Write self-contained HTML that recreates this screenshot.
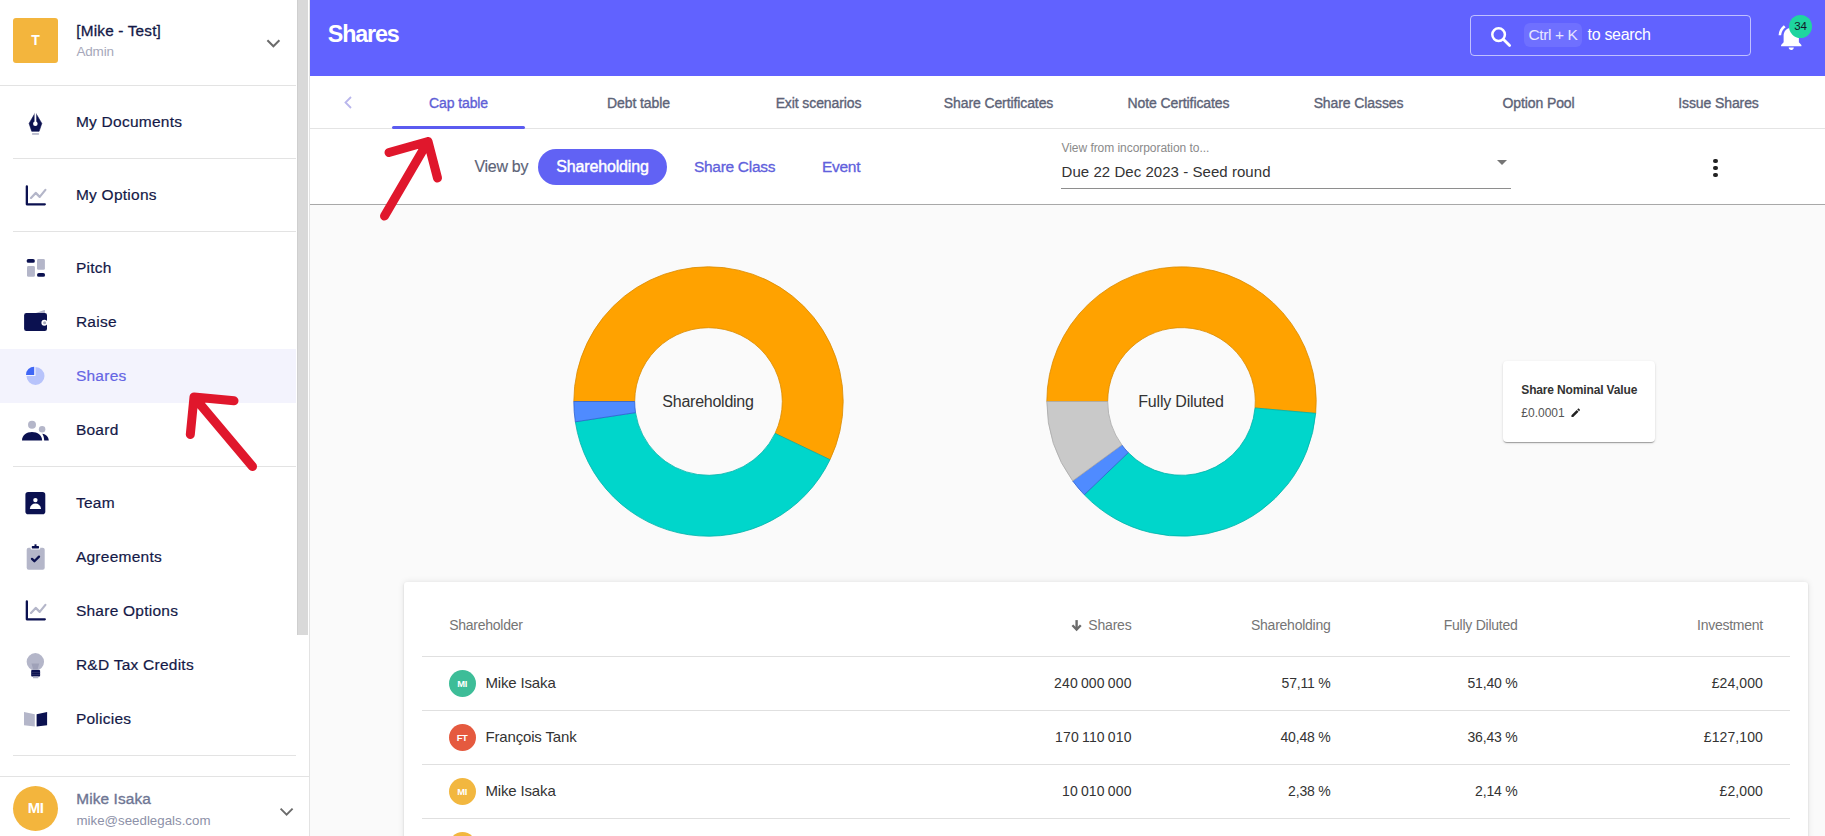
<!DOCTYPE html>
<html><head><meta charset="utf-8"><style>
html,body{margin:0;padding:0;width:1825px;height:836px;overflow:hidden;background:#fff;font-family:"Liberation Sans",sans-serif;}
.t{position:absolute;white-space:nowrap;}
.hl{position:absolute;height:1px;background:#e3e3e3;}
</style></head><body>
<div id="sb" style="position:absolute;left:0;top:0;width:309px;height:836px;background:#fff;border-right:1px solid #e3e3e3;"></div>
<div style="position:absolute;left:297px;top:0;width:11px;height:635px;background:#d9d9d9;border-left:1px solid #cfcfcf;box-sizing:border-box"></div>
<div style="position:absolute;left:13px;top:18px;width:45px;height:45px;border-radius:3px;background:#f3b53d;"></div>
<div class="t" style="left:-264.5px;width:600px;text-align:center;top:33px;font-size:14px;line-height:14px;color:#fff;font-weight:700;">T</div>
<div class="t" style="left:76.3px;top:23px;font-size:15.3px;line-height:15.3px;color:#141947;font-weight:400;-webkit-text-stroke:0.3px #141947;letter-spacing:0.2px">[Mike - Test]</div>
<div class="t" style="left:76.5px;top:45px;font-size:13.5px;line-height:13.5px;color:#a6a8ba;font-weight:400;letter-spacing:-0.2px">Admin</div>
<svg style="position:absolute;left:265px;top:37px" width="17" height="12" viewBox="0 0 17 12"><path d="M2.4 3.3 L8.4 9.3 L14.4 3.3" fill="none" stroke="#6b6b6b" stroke-width="2"/></svg>
<div class="hl" style="left:0;top:85px;width:296px"></div>
<svg style="position:absolute;left:25px;top:110px" width="22" height="28" viewBox="0 0 22 28"><path d="M10.4 2.6 L16.8 13.4 L14.1 21.3 L6.7 21.3 L4.1 13.4 Z" fill="#0b1150" stroke="#0b1150" stroke-width="0.6" stroke-linejoin="round"/><path d="M10.4 1.5 L10.4 12.5" stroke="#fff" stroke-width="1.8"/><circle cx="10.35" cy="13.8" r="2.3" fill="#fff"/><rect x="7.1" y="23.1" width="6.8" height="1.7" fill="#b4b6c9"/></svg><div class="t" style="left:75.9px;top:114px;font-size:15.5px;line-height:15.5px;color:#141947;font-weight:400;-webkit-text-stroke:0.2px #141947;letter-spacing:0.25px">My Documents</div>
<div class="hl" style="left:13px;top:158px;width:283px"></div>
<svg style="position:absolute;left:24.5px;top:185px" width="22" height="22" viewBox="0 0 22 22"><path d="M1.85 1.5 L1.85 19.3 L19.8 19.3" fill="none" stroke="#0b1150" stroke-width="2.3" stroke-linecap="round" stroke-linejoin="round"/><path d="M6 12.9 L10.7 7.9 L14.7 11.9 L20.4 4.9" fill="none" stroke="#b4b6c9" stroke-width="2.2" stroke-linecap="round" stroke-linejoin="round"/></svg><div class="t" style="left:75.9px;top:187px;font-size:15.5px;line-height:15.5px;color:#141947;font-weight:400;-webkit-text-stroke:0.2px #141947;letter-spacing:0.25px">My Options</div>
<div class="hl" style="left:13px;top:231px;width:283px"></div>
<svg style="position:absolute;left:25px;top:257px" width="22" height="22" viewBox="0 0 22 22"><rect x="1.6" y="2" width="8.3" height="3.8" rx="1.9" fill="#0b1150"/><rect x="2" y="9" width="7.9" height="10.8" rx="1.4" fill="#b4b6c9"/><rect x="12" y="2" width="7.9" height="10.8" rx="1.4" fill="#b4b6c9"/><rect x="12" y="16" width="8.1" height="3.8" rx="1.9" fill="#0b1150"/></svg><div class="t" style="left:75.9px;top:260px;font-size:15.5px;line-height:15.5px;color:#141947;font-weight:400;-webkit-text-stroke:0.2px #141947;letter-spacing:0.25px">Pitch</div>
<svg style="position:absolute;left:23px;top:308px" width="26" height="25" viewBox="0 0 26 25"><path d="M11.5 5.5 L21.2 2 Q21.9 1.8 21.9 2.6 L21.9 6 Z" fill="#b4b6c9"/><rect x="1.1" y="5" width="22.9" height="18" rx="2.2" fill="#0b1150"/><circle cx="21.4" cy="14.8" r="3" fill="#fff"/><circle cx="21.6" cy="14.8" r="1.5" fill="#a9abbd"/></svg><div class="t" style="left:75.9px;top:314px;font-size:15.5px;line-height:15.5px;color:#141947;font-weight:400;-webkit-text-stroke:0.2px #141947;letter-spacing:0.25px">Raise</div>
<div style="position:absolute;left:0;top:348.7px;width:296px;height:54px;background:#f3f3fd"></div><svg style="position:absolute;left:25px;top:365px" width="21" height="21" viewBox="0 0 21 21"><path d="M10.5 11 L10.5 2 A9 9 0 1 1 1.5 11 Z" fill="#b7c3fb"/><path d="M9.2 9.9 L1 9.9 A8.2 8.2 0 0 1 9.2 1.7 Z" fill="#3f66f5"/></svg><div class="t" style="left:75.9px;top:368px;font-size:15.5px;line-height:15.5px;color:#6565e4;font-weight:400;-webkit-text-stroke:0.2px #6565e4;letter-spacing:0.25px">Shares</div>
<svg style="position:absolute;left:21px;top:419px" width="29" height="23" viewBox="0 0 29 23"><circle cx="11" cy="5.7" r="4" fill="#b4b6c9"/><circle cx="21.1" cy="10.3" r="3.25" fill="#b4b6c9"/><path d="M1 21.6 C1 16 5.5 13 11 13 C16.5 13 21.1 16 21.1 21.6 Z" fill="#0b1150"/><path d="M21.3 14.8 C25.2 15.3 27.6 18 27.8 21.6 L23.2 21.6 C23 18.8 22.5 16.6 21.3 14.8 Z" fill="#0b1150"/></svg><div class="t" style="left:75.9px;top:422px;font-size:15.5px;line-height:15.5px;color:#141947;font-weight:400;-webkit-text-stroke:0.2px #141947;letter-spacing:0.25px">Board</div>
<div class="hl" style="left:13px;top:466px;width:283px"></div>
<svg style="position:absolute;left:25px;top:491px" width="22" height="25" viewBox="0 0 22 25"><rect x="0.4" y="1.1" width="19.9" height="22.1" rx="2.8" fill="#0b1150"/><circle cx="10.4" cy="9.1" r="2.2" fill="#fff"/><path d="M4.8 18.1 C5.2 14.5 7.5 12.6 10.4 12.6 C13.3 12.6 15.7 14.5 16.1 18.1 Z" fill="#fff"/></svg><div class="t" style="left:75.9px;top:495px;font-size:15.5px;line-height:15.5px;color:#141947;font-weight:400;-webkit-text-stroke:0.2px #141947;letter-spacing:0.25px">Team</div>
<svg style="position:absolute;left:25px;top:543px" width="22" height="28" viewBox="0 0 22 28"><rect x="1.7" y="4.7" width="18" height="22.1" rx="2" fill="#b4b6c9"/><rect x="5.6" y="2.4" width="9.6" height="4" rx="1" fill="#fff"/><rect x="6.8" y="3.1" width="7.2" height="2.3" rx="0.6" fill="#0b1150"/><rect x="9.5" y="1.3" width="2" height="2" fill="#0b1150"/><path d="M7 15.9 L9.4 18.2 L14 13.6" fill="none" stroke="#0b1150" stroke-width="2.3" stroke-linecap="round" stroke-linejoin="round"/></svg><div class="t" style="left:75.9px;top:549px;font-size:15.5px;line-height:15.5px;color:#141947;font-weight:400;-webkit-text-stroke:0.2px #141947;letter-spacing:0.25px">Agreements</div>
<svg style="position:absolute;left:24.5px;top:600px" width="22" height="22" viewBox="0 0 22 22"><path d="M1.85 1.5 L1.85 19.3 L19.8 19.3" fill="none" stroke="#0b1150" stroke-width="2.3" stroke-linecap="round" stroke-linejoin="round"/><path d="M6 12.9 L10.7 7.9 L14.7 11.9 L20.4 4.9" fill="none" stroke="#b4b6c9" stroke-width="2.2" stroke-linecap="round" stroke-linejoin="round"/></svg><div class="t" style="left:75.9px;top:603px;font-size:15.5px;line-height:15.5px;color:#141947;font-weight:400;-webkit-text-stroke:0.2px #141947;letter-spacing:0.25px">Share Options</div>
<svg style="position:absolute;left:25px;top:652px" width="21" height="28" viewBox="0 0 21 28"><circle cx="10.35" cy="9.8" r="8.7" fill="#b4b6c9"/><path d="M6.5 11.5 L14.2 11.5 L12.5 17.5 L8.2 17.5 Z" fill="#9fa1b8"/><rect x="6.2" y="18" width="8.9" height="6.5" rx="0.8" fill="#0b1150"/><rect x="6.2" y="20.3" width="8.9" height="0.6" fill="#3a3f70"/><rect x="6.2" y="22.3" width="8.9" height="0.6" fill="#3a3f70"/><rect x="8" y="24.5" width="5.4" height="1.8" rx="0.6" fill="#b4b6c9"/></svg><div class="t" style="left:75.9px;top:657px;font-size:15.5px;line-height:15.5px;color:#141947;font-weight:400;-webkit-text-stroke:0.2px #141947;letter-spacing:0.25px">R&amp;D Tax Credits</div>
<svg style="position:absolute;left:23px;top:710px" width="26" height="19" viewBox="0 0 26 19"><path d="M1 1.9 L11.8 4.3 L11.8 16.5 L1 15.3 Z" fill="#b4b6c9"/><path d="M13.6 4.3 L24.1 1.9 L24.1 15.3 L13.6 16.5 Z" fill="#0b1150"/></svg><div class="t" style="left:75.9px;top:711px;font-size:15.5px;line-height:15.5px;color:#141947;font-weight:400;-webkit-text-stroke:0.2px #141947;letter-spacing:0.25px">Policies</div>
<div class="hl" style="left:13px;top:755px;width:283px"></div>
<div class="hl" style="left:0;top:776px;width:309px"></div>
<div style="position:absolute;left:13px;top:786px;width:45px;height:45px;border-radius:50%;background:#f3b53d"></div>
<div class="t" style="left:-264.5px;width:600px;text-align:center;top:800px;font-size:15px;line-height:15px;color:#fff;font-weight:700;letter-spacing:-0.5px">MI</div>
<div class="t" style="left:76.3px;top:791px;font-size:15.4px;line-height:15.4px;color:#6e7593;font-weight:400;-webkit-text-stroke:0.35px #6e7593;letter-spacing:0.1px">Mike Isaka</div>
<div class="t" style="left:76.5px;top:814px;font-size:13.3px;line-height:13.3px;color:#8d91a8;font-weight:400;">mike@seedlegals.com</div>
<svg style="position:absolute;left:278px;top:805px" width="17" height="12" viewBox="0 0 17 12"><path d="M2.6 3.6 L8.6 9.6 L14.6 3.6" fill="none" stroke="#6b6b6b" stroke-width="1.9"/></svg>
<div style="position:absolute;left:310px;top:0;width:1515px;height:76px;background:#6162ff"></div>
<div class="t" style="left:327.8px;top:23px;font-size:23.3px;line-height:23.3px;color:#fff;font-weight:700;letter-spacing:-1.15px">Shares</div>
<div style="position:absolute;left:1470px;top:15px;width:281px;height:41px;box-sizing:border-box;border:1px solid rgba(255,255,255,0.6);border-radius:4px"></div>
<svg style="position:absolute;left:1488px;top:24px" width="26" height="26" viewBox="0 0 26 26"><circle cx="10.6" cy="10.6" r="6.3" fill="none" stroke="#fff" stroke-width="2.5"/><path d="M15.3 15.3 L21.6 21.6" stroke="#fff" stroke-width="2.8" stroke-linecap="round"/></svg>
<div style="position:absolute;left:1524px;top:23px;width:58px;height:24px;border-radius:6px;background:rgba(255,255,255,0.09)"></div>
<div class="t" style="left:1528.5px;top:27px;font-size:15.5px;line-height:15.5px;color:#e6e6ff;font-weight:400;letter-spacing:-0.4px">Ctrl + K</div>
<div class="t" style="left:1587.5px;top:27px;font-size:16px;line-height:16px;color:#fff;font-weight:400;letter-spacing:-0.3px">to search</div>
<svg style="position:absolute;left:1776.3px;top:22px" width="30.5" height="30.5" viewBox="0 0 24 24"><path fill="#fff" d="M7.58 4.08L6.15 2.65C3.75 4.48 2.17 7.3 2.03 10.5h2c.15-2.65 1.51-4.97 3.55-6.42zm12.39 6.42h2c-.15-3.2-1.73-6.02-4.12-7.85l-1.42 1.43c2.02 1.45 3.39 3.77 3.54 6.42zM18 11c0-3.07-1.64-5.64-4.5-6.32V4c0-.83-.67-1.5-1.5-1.5s-1.5.67-1.5 1.5v.68C7.63 5.36 6 7.92 6 11v5l-2 2v1h16v-1l-2-2v-5zm-6 11c.14 0 .27-.01.4-.04.65-.14 1.18-.58 1.44-1.18.1-.24.15-.5.15-.78h-4c.01 1.1.9 2 2.01 2z"/></svg>
<div style="position:absolute;left:1789px;top:14.8px;width:23px;height:23px;border-radius:50%;background:#1fd59f"></div>
<div class="t" style="left:1500.6px;width:600px;text-align:center;top:21px;font-size:11.5px;line-height:11.5px;color:#111827;font-weight:400;">34</div>
<div style="position:absolute;left:310px;top:76px;width:1515px;height:53px;background:#fff;border-bottom:1px solid #e4e4e4;box-sizing:border-box"></div>
<svg style="position:absolute;left:340px;top:94px" width="16" height="16" viewBox="0 0 16 16"><path d="M11 3 L5.5 8.5 L11 14" fill="none" stroke="#b9b6ec" stroke-width="1.8"/></svg>
<div class="t" style="left:158.5px;width:600px;text-align:center;top:96px;font-size:14px;line-height:14px;color:#5f5fd6;font-weight:400;-webkit-text-stroke:0.35px #5f5fd6;letter-spacing:-0.1px">Cap table</div>
<div class="t" style="left:338.5px;width:600px;text-align:center;top:96px;font-size:14px;line-height:14px;color:#5d6377;font-weight:400;-webkit-text-stroke:0.35px #5d6377;letter-spacing:-0.1px">Debt table</div>
<div class="t" style="left:518.5px;width:600px;text-align:center;top:96px;font-size:14px;line-height:14px;color:#5d6377;font-weight:400;-webkit-text-stroke:0.35px #5d6377;letter-spacing:-0.1px">Exit scenarios</div>
<div class="t" style="left:698.5px;width:600px;text-align:center;top:96px;font-size:14px;line-height:14px;color:#5d6377;font-weight:400;-webkit-text-stroke:0.35px #5d6377;letter-spacing:-0.1px">Share Certificates</div>
<div class="t" style="left:878.5px;width:600px;text-align:center;top:96px;font-size:14px;line-height:14px;color:#5d6377;font-weight:400;-webkit-text-stroke:0.35px #5d6377;letter-spacing:-0.1px">Note Certificates</div>
<div class="t" style="left:1058.5px;width:600px;text-align:center;top:96px;font-size:14px;line-height:14px;color:#5d6377;font-weight:400;-webkit-text-stroke:0.35px #5d6377;letter-spacing:-0.1px">Share Classes</div>
<div class="t" style="left:1238.5px;width:600px;text-align:center;top:96px;font-size:14px;line-height:14px;color:#5d6377;font-weight:400;-webkit-text-stroke:0.35px #5d6377;letter-spacing:-0.1px">Option Pool</div>
<div class="t" style="left:1418.5px;width:600px;text-align:center;top:96px;font-size:14px;line-height:14px;color:#5d6377;font-weight:400;-webkit-text-stroke:0.35px #5d6377;letter-spacing:-0.1px">Issue Shares</div>
<div style="position:absolute;left:392px;top:126px;width:133px;height:3px;border-radius:2px;background:#5b5bf0"></div>
<div style="position:absolute;left:310px;top:129px;width:1515px;height:75px;background:#fff"></div>
<div style="position:absolute;left:310px;top:204px;width:1515px;height:1px;background:#a8a8a8;box-shadow:0 1px 2px rgba(0,0,0,0.12)"></div>
<div class="t" style="left:474.5px;top:159px;font-size:16px;line-height:16px;color:#5d6377;font-weight:400;letter-spacing:-0.3px;-webkit-text-stroke:0.15px #5d6377">View by</div>
<div style="position:absolute;left:538px;top:149px;width:129px;height:36px;border-radius:18px;background:#6162f4"></div>
<div class="t" style="left:302.5px;width:600px;text-align:center;top:159px;font-size:16px;line-height:16px;color:#fff;font-weight:400;-webkit-text-stroke:0.45px #fff;letter-spacing:-0.15px">Shareholding</div>
<div class="t" style="left:694px;top:159px;font-size:15.5px;line-height:15.5px;color:#6060dc;font-weight:400;-webkit-text-stroke:0.3px #6060dc;letter-spacing:-0.3px">Share Class</div>
<div class="t" style="left:822px;top:159px;font-size:15.5px;line-height:15.5px;color:#6060dc;font-weight:400;-webkit-text-stroke:0.3px #6060dc;letter-spacing:-0.3px">Event</div>
<div class="t" style="left:1061.5px;top:142px;font-size:12px;line-height:12px;color:#8a8a8a;font-weight:400;letter-spacing:-0.05px">View from incorporation to...</div>
<div class="t" style="left:1061.5px;top:164px;font-size:15px;line-height:15px;color:#333;font-weight:400;letter-spacing:0.05px">Due 22 Dec 2023 - Seed round</div>
<div style="position:absolute;left:1061px;top:188px;width:450px;height:1px;background:#8e8e8e"></div>
<svg style="position:absolute;left:1496px;top:159px" width="12" height="7" viewBox="0 0 12 7"><path d="M1 1 L11 1 L6 6 Z" fill="#757575"/></svg>
<div style="position:absolute;left:1713.4px;top:159.0px;width:4.2px;height:4.2px;border-radius:50%;background:#222"></div>
<div style="position:absolute;left:1713.4px;top:165.8px;width:4.2px;height:4.2px;border-radius:50%;background:#222"></div>
<div style="position:absolute;left:1713.4px;top:172.5px;width:4.2px;height:4.2px;border-radius:50%;background:#222"></div>
<div style="position:absolute;left:310px;top:205px;width:1515px;height:631px;background:#fafafa"></div>
<svg style="position:absolute;left:572.9px;top:266.0px" width="271" height="271" viewBox="0 0 271 271"><path d="M0.80 135.50A134.7 134.7 0 1 1 256.98 193.69L202.06 167.38A73.8 73.8 0 1 0 61.70 135.50Z" fill="#ffa200" stroke="#d98a00" stroke-width="0.8"/>
<path d="M256.98 193.69A134.7 134.7 0 0 1 2.34 155.82L62.54 146.63A73.8 73.8 0 0 0 202.06 167.38Z" fill="#00d6cb" stroke="#00b3aa" stroke-width="0.8"/>
<path d="M2.34 155.82A134.7 134.7 0 0 1 0.80 135.50L61.70 135.50A73.8 73.8 0 0 0 62.54 146.63Z" fill="#4f8bff" stroke="#2f62d0" stroke-width="0.8"/></svg>
<div class="t" style="left:408px;width:600px;text-align:center;top:394px;font-size:16px;line-height:16px;color:#333;font-weight:400;letter-spacing:-0.25px">Shareholding</div>
<svg style="position:absolute;left:1045.5px;top:266.0px" width="271" height="271" viewBox="0 0 271 271"><path d="M0.80 135.50A134.7 134.7 0 1 1 269.68 147.33L209.01 141.98A73.8 73.8 0 1 0 61.70 135.50Z" fill="#ffa200" stroke="#d98a00" stroke-width="0.8"/>
<path d="M269.68 147.33A134.7 134.7 0 0 1 38.30 228.75L82.24 186.59A73.8 73.8 0 0 0 209.01 141.98Z" fill="#00d6cb" stroke="#00b3aa" stroke-width="0.8"/>
<path d="M38.30 228.75A134.7 134.7 0 0 1 26.67 214.88L75.88 178.99A73.8 73.8 0 0 0 82.24 186.59Z" fill="#4f8bff" stroke="#2f62d0" stroke-width="0.8"/>
<path d="M26.67 214.88A134.7 134.7 0 0 1 0.80 135.50L61.70 135.50A73.8 73.8 0 0 0 75.88 178.99Z" fill="#c9c9c9" stroke="#aaaaaa" stroke-width="0.8"/></svg>
<div class="t" style="left:881px;width:600px;text-align:center;top:394px;font-size:16px;line-height:16px;color:#333;font-weight:400;letter-spacing:-0.2px">Fully Diluted</div>
<div style="position:absolute;left:1503px;top:361px;width:152px;height:81px;background:#fff;border-radius:4px;box-shadow:0 2px 1px -1px rgba(0,0,0,0.2),0 1px 1px 0 rgba(0,0,0,0.14),0 1px 3px 0 rgba(0,0,0,0.12)"></div>
<div class="t" style="left:1521.3px;top:384px;font-size:12px;line-height:12px;color:#333;font-weight:700;letter-spacing:-0.15px">Share Nominal Value</div>
<div class="t" style="left:1521.3px;top:407px;font-size:12px;line-height:12px;color:#555;font-weight:400;">£0.0001</div>
<svg style="position:absolute;left:1569.5px;top:407px" width="11.5" height="11.5" viewBox="0 0 24 24"><path fill="#222" d="M3 17.25V21h3.75L17.81 9.94l-3.75-3.75L3 17.25zM20.71 7.04c.39-.39.39-1.02 0-1.41l-2.34-2.34a.9959.9959 0 0 0-1.41 0l-1.83 1.83 3.75 3.75 1.83-1.83z"/></svg>
<div style="position:absolute;left:404px;top:582px;width:1404px;height:300px;background:#fff;border-radius:3px;box-shadow:0 1px 2px -1px rgba(0,0,0,0.2),0 1px 2px 0 rgba(0,0,0,0.10),0 0 6px 0 rgba(0,0,0,0.10)"></div>
<div class="t" style="left:449.2px;top:618px;font-size:14px;line-height:14px;color:#757575;font-weight:400;letter-spacing:-0.25px">Shareholder</div>
<svg style="position:absolute;left:1064px;top:612px" width="24" height="26" viewBox="1064 612 24 26"><path d="M1076.6 620.1 L1076.6 629" stroke="#6b6b6b" stroke-width="2.4"/><path d="M1072.4 625.2 L1076.6 629.6 L1080.8 625.2" fill="none" stroke="#6b6b6b" stroke-width="2.3"/></svg>
<div class="t" style="right:693.5px;top:618px;font-size:14px;line-height:14px;color:#757575;font-weight:400;letter-spacing:-0.2px">Shares</div>
<div class="t" style="right:494.5px;top:618px;font-size:14px;line-height:14px;color:#757575;font-weight:400;letter-spacing:-0.25px">Shareholding</div>
<div class="t" style="right:307.5px;top:618px;font-size:14px;line-height:14px;color:#757575;font-weight:400;letter-spacing:-0.25px">Fully Diluted</div>
<div class="t" style="right:62px;top:618px;font-size:14px;line-height:14px;color:#757575;font-weight:400;letter-spacing:-0.25px">Investment</div>
<div class="hl" style="left:422px;top:655.5px;width:1368px;background:#e0e0e0"></div>
<div class="hl" style="left:422px;top:709.5px;width:1368px;background:#e0e0e0"></div>
<div class="hl" style="left:422px;top:763.5px;width:1368px;background:#e0e0e0"></div>
<div class="hl" style="left:422px;top:817.5px;width:1368px;background:#e0e0e0"></div>
<div style="position:absolute;left:448.9px;top:669.8px;width:27.4px;height:27.4px;border-radius:50%;background:#3dbd98"></div>
<div class="t" style="left:162.10000000000002px;width:600px;text-align:center;top:679px;font-size:9.4px;line-height:9.4px;color:#fff;font-weight:700;letter-spacing:-0.3px">MI</div>
<div class="t" style="left:485.4px;top:675px;font-size:15px;line-height:15px;color:#333;font-weight:400;letter-spacing:-0.15px">Mike Isaka</div>
<div class="t" style="right:693.2px;top:676px;font-size:14px;line-height:14px;color:#333;font-weight:400;letter-spacing:0.2px">240&#8201;000&#8201;000</div>
<div class="t" style="right:494.5px;top:676px;font-size:14px;line-height:14px;color:#333;font-weight:400;letter-spacing:-0.2px">57,11 %</div>
<div class="t" style="right:307.5px;top:676px;font-size:14px;line-height:14px;color:#333;font-weight:400;letter-spacing:-0.2px">51,40 %</div>
<div class="t" style="right:62px;top:676px;font-size:14px;line-height:14px;color:#333;font-weight:400;letter-spacing:0.1px">£24,000</div>
<div style="position:absolute;left:448.9px;top:723.8px;width:27.4px;height:27.4px;border-radius:50%;background:#e55a3f"></div>
<div class="t" style="left:162.10000000000002px;width:600px;text-align:center;top:733px;font-size:9.4px;line-height:9.4px;color:#fff;font-weight:700;letter-spacing:-0.3px">FT</div>
<div class="t" style="left:485.4px;top:729px;font-size:15px;line-height:15px;color:#333;font-weight:400;letter-spacing:-0.15px">François Tank</div>
<div class="t" style="right:693.2px;top:730px;font-size:14px;line-height:14px;color:#333;font-weight:400;letter-spacing:0.2px">170&#8201;110&#8201;010</div>
<div class="t" style="right:494.5px;top:730px;font-size:14px;line-height:14px;color:#333;font-weight:400;letter-spacing:-0.2px">40,48 %</div>
<div class="t" style="right:307.5px;top:730px;font-size:14px;line-height:14px;color:#333;font-weight:400;letter-spacing:-0.2px">36,43 %</div>
<div class="t" style="right:62px;top:730px;font-size:14px;line-height:14px;color:#333;font-weight:400;letter-spacing:0.1px">£127,100</div>
<div style="position:absolute;left:448.9px;top:777.8px;width:27.4px;height:27.4px;border-radius:50%;background:#f2b73f"></div>
<div class="t" style="left:162.10000000000002px;width:600px;text-align:center;top:787px;font-size:9.4px;line-height:9.4px;color:#fff;font-weight:700;letter-spacing:-0.3px">MI</div>
<div class="t" style="left:485.4px;top:783px;font-size:15px;line-height:15px;color:#333;font-weight:400;letter-spacing:-0.15px">Mike Isaka</div>
<div class="t" style="right:693.2px;top:784px;font-size:14px;line-height:14px;color:#333;font-weight:400;letter-spacing:0.2px">10&#8201;010&#8201;000</div>
<div class="t" style="right:494.5px;top:784px;font-size:14px;line-height:14px;color:#333;font-weight:400;letter-spacing:-0.2px">2,38 %</div>
<div class="t" style="right:307.5px;top:784px;font-size:14px;line-height:14px;color:#333;font-weight:400;letter-spacing:-0.2px">2,14 %</div>
<div class="t" style="right:62px;top:784px;font-size:14px;line-height:14px;color:#333;font-weight:400;letter-spacing:0.1px">£2,000</div>
<div style="position:absolute;left:448.9px;top:831.7px;width:27.4px;height:27.4px;border-radius:50%;background:#f2b73f"></div>
<svg style="position:absolute;left:0;top:0" width="1825" height="836" viewBox="0 0 1825 836"><g fill="none" stroke="#e0172c" stroke-width="9" stroke-linecap="round" stroke-linejoin="round"><path d="M384.5 216 L428 141.5 M389 152.5 L428 141.5 L437.5 178"/><path d="M252.5 466.5 L194 397 M190.3 434.5 L194 397 L234 400.8"/></g></svg>
</body></html>
